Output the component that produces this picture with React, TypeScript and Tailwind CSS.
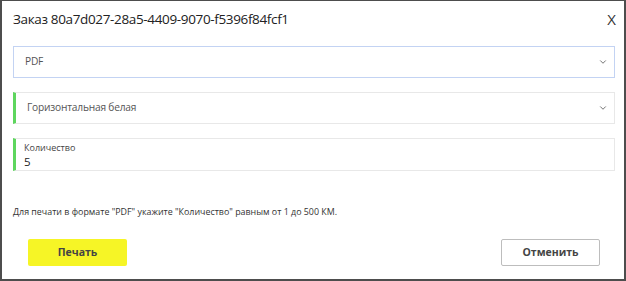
import { ChevronDown } from "lucide-react";

const font = { fontFamily: '"Open Sans", "Noto Sans", sans-serif' };

function SelectBox({ value, accent, focus }: { value: string; accent?: boolean; focus?: boolean }) {
	return (
		<div
			className={
				"flex h-[32px] items-center justify-between pl-[11px] pr-[6px] bg-white border " +
				(focus ? "border-[#c3d3f3] " : "border-[#e8e8e8] ") +
				(accent ? "border-l-[3px] border-l-[#5ed65e]" : "")
			}
		>
			<span className="text-[10.2px] tracking-[-0.2px] text-[#555]">{value}</span>
			<ChevronDown className="w-[10px] h-[10px] text-[#666]" strokeWidth={2.2} />
		</div>
	);
}

export default function App() {
	return (
		<div style={font} className="w-[626px] h-[281px] bg-white border-2 border-[#4d4d4d] border-t-[1px] flex flex-col">
			<div className="flex items-center justify-between h-[34px] pl-[11px] pr-[8px] pt-[2px]">
				<span className="text-[13.5px] tracking-[-0.35px] text-[#222]">Заказ 80a7d027-28a5-4409-9070-f5396f84fcf1</span>
				<span className="text-[15px] text-[#333]">X</span>
			</div>
			<div className="flex flex-col gap-[14px] pl-[11px] pr-[9px] pt-[11px]">
				<SelectBox value="PDF" focus />
				<SelectBox value="Горизонтальная белая" accent />
				<div className="h-[33px] bg-white border border-[#e8e8e8] border-l-[3px] border-l-[#5ed65e] pl-[8px] pt-[4px] flex flex-col leading-none">
					<span className="text-[9px] text-[#444]">Количество</span>
					<span className="text-[11.5px] text-[#222] mt-[4px]">5</span>
				</div>
			</div>
			<p className="pl-[11px] mt-[34px] text-[8.9px] text-[#333]">
				Для печати в формате "PDF" укажите "Количество" равным от 1 до 500 КМ.
			</p>
			<div className="flex justify-between pl-[26px] pr-[24px] mt-[21px]">
				<button className="w-[99px] h-[27px] rounded-[2px] bg-[#f6f526] text-[10.5px] font-bold text-[#444]">Печать</button>
				<button className="w-[99px] h-[27px] rounded-[2px] bg-white border border-[#bdbdbd] text-[10.5px] font-bold text-[#444]">Отменить</button>
			</div>
		</div>
	);
}
